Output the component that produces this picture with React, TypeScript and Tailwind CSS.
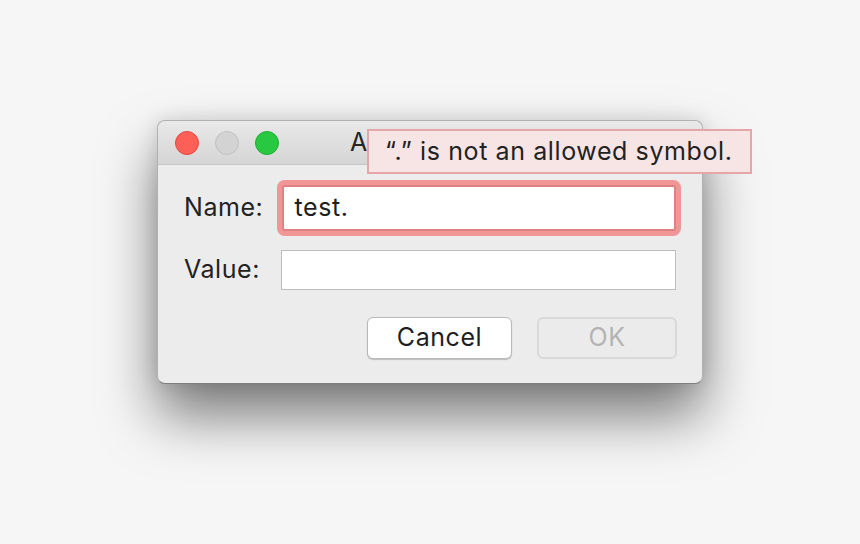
import React from "react";

export default function App() {
  return (
    <div
      className="w-[860px] h-[544px] bg-[#f6f6f6] flex justify-center pt-[120px]"
      style={{ fontFamily: "Inter, 'Noto Sans', sans-serif" }}
    >
      <div className="relative w-[546px] h-[264px] rounded-[8px] border border-[#b0b0b0] border-b-[#7e7e7e] bg-[#ececec] shadow-[0_32px_55px_rgba(0,0,0,0.5),0_0_20px_rgba(0,0,0,0.12)] flex flex-col overflow-visible">
        {/* Title bar */}
        <div className="relative h-[44px] shrink-0 rounded-t-[8px] border-b border-[#c4c4c4] bg-gradient-to-b from-[#e9e9e9] to-[#d5d5d5] flex items-center px-[17px]">
          <div className="flex gap-[16px]">
            <span className="w-[24px] h-[24px] rounded-full bg-[#fe5f57] border border-[#e5453e]" />
            <span className="w-[24px] h-[24px] rounded-full bg-[#d3d3d3] border border-[#c1c1c1]" />
            <span className="w-[24px] h-[24px] rounded-full bg-[#28c840] border border-[#1fae33]" />
          </div>
          <div className="absolute inset-y-0 left-[192px] flex items-center text-[25px] tracking-[0.5px] text-[#262626] pointer-events-none">
            Add Variable
          </div>
        </div>

        {/* Body */}
        <div className="flex flex-col px-[26px] pt-[20px] text-[25px] tracking-[0.55px]">
          <div className="flex items-center h-[46px]">
            <span className="w-[98px] text-[#222]">Name:</span>
            <div className="w-[396px] h-[46px] bg-white border-2 border-[#df8282] rounded-[3px] shadow-[0_0_0_5px_#f19696] flex items-center pl-[11px] text-[#1e1e1e]">
              test.
            </div>
          </div>
          <div className="flex items-center h-[40px] mt-[19px]">
            <span className="w-[98px] text-[#222]">Value:</span>
            <div className="w-[397px] h-[40px] bg-white border border-[#bdbdbd]" />
          </div>
          <div className="flex justify-end gap-[25px] mt-[27px] mr-[-1px]">
            <button className="w-[145px] h-[42px] rounded-[6px] bg-white border border-[#b8b8b8] shadow-[0_1px_1px_rgba(0,0,0,0.2)] text-[#1e1e1e]">
              Cancel
            </button>
            <button className="w-[140px] h-[42px] rounded-[6px] bg-[#ebebeb] border-2 border-[#d9d9d9] text-[#b3b3b3]">
              OK
            </button>
          </div>
        </div>

        {/* Error tooltip */}
        <div className="absolute left-[209px] top-[8px] w-[385px] h-[45px] bg-[#f7e5e6] border-2 border-[#e5a6a9] flex items-center pl-[16px] text-[25px] tracking-[0.6px] text-[#222]">
          “.” is not an allowed symbol.
        </div>
      </div>
    </div>
  );
}
